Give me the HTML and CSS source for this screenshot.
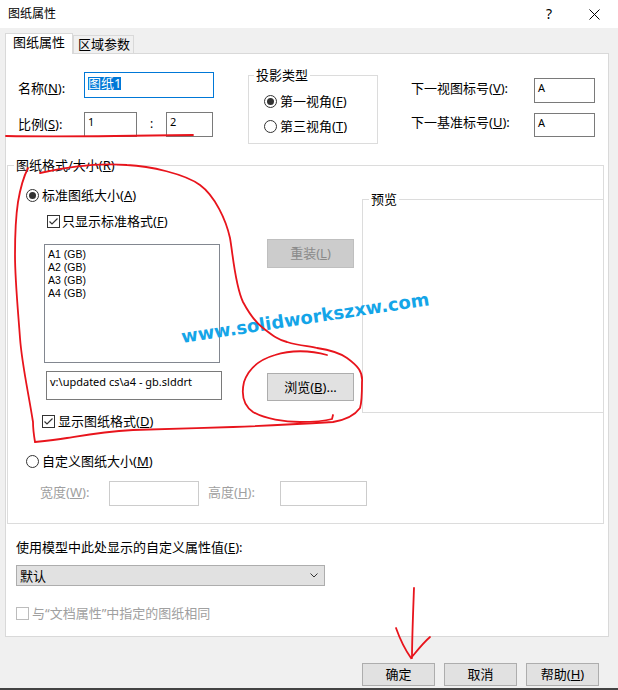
FILE: index.html
```html
<!DOCTYPE html>
<html lang="zh-CN">
<head>
<meta charset="utf-8">
<title>图纸属性</title>
<link rel="stylesheet" href="styles.css">
</head>
<body>
<div class="titlebar">
  <span class="title">图纸属性</span>
  <span class="help">?</span>
  <svg class="close" width="11" height="11" viewBox="0 0 11 11"><path d="M0.5 0.5 L10.5 10.5 M10.5 0.5 L0.5 10.5" stroke="#000" stroke-width="1" fill="none"/></svg>
</div>

<div class="tabs">
  <div class="tab active">图纸属性</div>
  <div class="tab">区域参数</div>
</div>

<div class="panel">
  <div class="top">
    <div class="basic">
      <span class="lbl lbl-name">名称(<u>N</u>):</span>
      <div class="field name-field"><span class="sel">图纸1</span></div>
      <span class="lbl lbl-scale">比例(<u>S</u>):</span>
      <div class="scale">
        <div class="field val s1">1</div>
        <span class="colon">:</span>
        <div class="field val s2">2</div>
      </div>
    </div>

    <fieldset class="group proj">
      <legend>投影类型</legend>
      <div class="opt"><span class="radio on"></span><span>第一视角(<u>F</u>)</span></div>
      <div class="opt opt2"><span class="radio"></span><span>第三视角(<u>T</u>)</span></div>
    </fieldset>

    <div class="refs">
      <span class="lbl r1">下一视图标号(<u>V</u>):</span>
      <div class="field val rin1">A</div>
      <span class="lbl r2">下一基准标号(<u>U</u>):</span>
      <div class="field val rin2">A</div>
    </div>
  </div>

  <fieldset class="group format">
    <legend>图纸格式/大小(<u>R</u>)</legend>
    <div class="row-a">
      <div class="left-col">
        <div class="opt"><span class="radio on"></span><span>标准图纸大小(<u>A</u>)</span></div>
        <div class="chk chk-std">
          <svg class="box" width="13" height="13" viewBox="0 0 13 13"><rect x="0.5" y="0.5" width="12" height="12" fill="#fff" stroke="#333"/><path d="M2.5 6.5 L5 9 L10.5 3.5" fill="none" stroke="#333" stroke-width="1.2"/></svg>
          <span>只显示标准格式(<u>F</u>)</span>
        </div>
        <div class="listbox">
          <div>A1 (GB)</div>
          <div>A2 (GB)</div>
          <div>A3 (GB)</div>
          <div>A4 (GB)</div>
        </div>
        <div class="field val path">v:\updated cs\a4 - gb.slddrt</div>
      </div>
      <div class="mid-col">
        <div class="btn disabled reload">重装(<u>L</u>)</div>
        <div class="btn browse">浏览(<u>B</u>)...</div>
      </div>
      <fieldset class="group preview">
        <legend>预览</legend>
      </fieldset>
    </div>
    <div class="chk chk-show">
      <svg class="box" width="13" height="13" viewBox="0 0 13 13"><rect x="0.5" y="0.5" width="12" height="12" fill="#fff" stroke="#333"/><path d="M2.5 6.5 L5 9 L10.5 3.5" fill="none" stroke="#333" stroke-width="1.2"/></svg>
      <span>显示图纸格式(<u>D</u>)</span>
    </div>
    <div class="opt opt-custom"><span class="radio"></span><span>自定义图纸大小(<u>M</u>)</span></div>
    <div class="size-row">
      <span class="lbl dis w-lbl">宽度(<u>W</u>):</span>
      <div class="field dis-field w-in"></div>
      <span class="lbl dis h-lbl">高度(<u>H</u>):</span>
      <div class="field dis-field h-in"></div>
    </div>
  </fieldset>

  <div class="prop-label">使用模型中此处显示的自定义属性值(<u>E</u>):</div>
  <div class="select">
    <span>默认</span>
    <svg width="8" height="5" viewBox="0 0 8 5"><path d="M0.5 0.5 L4 4 L7.5 0.5" fill="none" stroke="#333" stroke-width="1"/></svg>
  </div>
  <div class="chk same-chk">
    <svg class="box" width="13" height="13" viewBox="0 0 13 13"><rect x="0.5" y="0.5" width="12" height="12" fill="#fff" stroke="#bcbcbc"/></svg>
    <span class="dis">与“文档属性”中指定的图纸相同</span>
  </div>
</div>

<div class="buttons">
  <div class="btn dlg">确定</div>
  <div class="btn dlg">取消</div>
  <div class="btn dlg">帮助(<u>H</u>)</div>
</div>

<span class="watermark">www.solidworkszxw.com</span>

<svg class="annot" width="618" height="690" viewBox="0 0 618 690">
  <g fill="none" stroke="#e8141c" stroke-width="1.8" stroke-linecap="round">
    <path d="M6 136 C 60 137, 130 136, 193 135"/>
    <path d="M40 173 C 70 166, 100 163, 127 165 C 150 166, 185 174, 200 185 C 215 196, 226 220, 230 238 C 233 255, 235 285, 243 302 C 250 315, 255 322, 263 328 C 272 335, 278 340, 287 342 C 300 346, 310 346, 317 348 C 330 350, 340 353, 347 358 C 358 366, 363 372, 362 382 C 362 395, 362 402, 360 408 C 355 415, 345 420, 333 422 C 300 424, 260 426, 233 427 C 200 428, 160 429, 133 430 C 100 432, 80 436, 67 438 C 55 440, 45 441, 35 442 C 34 436, 33 430, 33 422 C 28 390, 22 365, 20 338 C 18 310, 15 280, 15 255 C 15 235, 16 215, 18 202 C 20 190, 23 178, 28 168"/>
    <path d="M327 355 C 310 350, 290 350, 275 355 C 258 360, 248 370, 244 382 C 241 395, 243 405, 253 412 C 265 419, 285 422, 300 422 C 315 422, 325 421, 332 419 L 333 415"/>
    <path d="M414 588 C 413 615, 412 640, 412 658 M396 628 C 401 642, 406 651, 411 658 C 416 652, 423 643, 430 637"/>
  </g>
</svg>
</body>
</html>
```

FILE: styles.css
```css
* { box-sizing: border-box; }
html, body { margin: 0; padding: 0; }
body {
  width: 618px;
  height: 690px;
  overflow: hidden;
  position: relative;
  background: #f0f0f0;
  border-bottom: 2px solid #444;
  font-family: "Noto Sans", "Noto Sans CJK SC", sans-serif;
  font-size: 13px;
  line-height: 16px;
  color: #000;
}
u { text-decoration: underline; text-underline-offset: 1px; text-decoration-thickness: 1px; }

/* title bar */
.titlebar {
  height: 28px;
  background: #fff;
  display: flex;
  align-items: center;
  padding: 0 18px 0 8px;
}
.title { flex: 1; font-size: 12px; }
.help { width: 12px; text-align: center; font-size: 14px; margin-right: 34px; }
.close { display: block; }

/* tabs */
.tabs {
  height: 25px;
  display: flex;
  align-items: flex-end;
  padding-left: 5px;
}
.tab {
  height: 18px;
  border: 1px solid #d9d9d9;
  border-bottom: none;
  background: #f0f0f0;
  padding: 0 3px 0 4px;
  line-height: 16px;
}
.tab.active {
  height: 21px;
  background: #fff;
  padding: 0 7px;
  margin-bottom: -1px;
  position: relative;
  z-index: 1;
}

/* panel */
.panel {
  margin-left: 5px;
  width: 604px;
  height: 584px;
  background: #fff;
  border: 1px solid #d9d9d9;
}
.top { display: flex; align-items: flex-start; }

.field { border: 1px solid #7a7a7a; background: #fff; }
.val { font-size: 11px; padding: 1px 3px; line-height: 16px; }

.basic {
  margin: 18px 0 0 12px;
  display: grid;
  grid-template-columns: 66px auto;
  row-gap: 14px;
}
.lbl-name { margin-top: 8px; }
.lbl-scale { margin-top: 4px; }
.name-field {
  width: 130px;
  height: 26px;
  border-color: #0078d7;
  padding: 2px 3px;
}
.sel {
  display: inline-block;
  background: #0078d7;
  color: #fff;
  line-height: 13px;
}
.scale { display: flex; align-items: flex-start; }
.s1 { width: 53px; height: 25px; }
.colon { width: 29px; text-align: center; line-height: 16px; margin-top: 4px; font-size: 12px; }
.s2 { width: 47px; height: 25px; }

/* group boxes */
fieldset.group {
  border: 1px solid #dcdcdc;
  margin: 0;
  min-width: 0;
}
fieldset.group legend {
  padding: 0 2px;
  line-height: 16px;
}
.proj {
  margin: 13px 0 0 34px !important;
  width: 130px;
  padding: 8px 0 7px 0;
}
.proj legend { margin-left: 5px; }

.opt {
  display: flex;
  align-items: center;
  gap: 3px;
  height: 20px;
}
.proj .opt { margin-left: 15px; }
.proj .opt2 { margin-top: 5px; }
.radio {
  width: 13px;
  height: 13px;
  border: 1px solid #333;
  border-radius: 50%;
  background: #fff;
  display: inline-flex;
  align-items: center;
  justify-content: center;
  flex-shrink: 0;
}
.radio.on::after {
  content: "";
  width: 7px;
  height: 7px;
  border-radius: 50%;
  background: #333;
}

.refs {
  margin: 24px 0 0 33px;
  display: grid;
  grid-template-columns: 123px 61px;
  row-gap: 10px;
}
.r1 { margin-top: 2px; }
.r2 { margin-top: 1px; }
.rin1 { height: 25px; }
.rin2 { height: 24px; }

/* paper format group */
.format {
  margin: 13px 0 0 1px !important;
  width: 597px;
  padding: 12px 0 17px 0;
}
.format > legend { margin-left: 6px; }
.row-a { display: flex; align-items: flex-start; }
.left-col { margin-left: 18px; width: 196px; flex-shrink: 0; }
.chk { display: flex; align-items: center; gap: 3px; height: 20px; }
.box { display: block; flex-shrink: 0; }
.chk-std { margin: 6px 0 0 21px; gap: 2px; }
.listbox {
  margin: 13px 0 0 18px;
  width: 176px;
  height: 119px;
  border: 1px solid #828790;
  padding: 3px 3px;
  font-family: "Liberation Sans", sans-serif;
  font-size: 10.5px;
  line-height: 13px;
}
.path {
  margin: 8px 0 0 20px;
  width: 176px;
  height: 29px;
  padding: 2px 3px;
}
.mid-col { margin-left: 45px; width: 87px; flex-shrink: 0; }
.btn {
  background: #e1e1e1;
  border: 1px solid #adadad;
  text-align: center;
}
.reload {
  margin-top: 54px;
  height: 29px;
  line-height: 27px;
  background: #cccccc;
  border-color: #bfbfbf;
  color: #8a8a8a;
}
.browse {
  margin-top: 105px;
  height: 28px;
  line-height: 26px;
}
.preview {
  margin: 6px -1px 0 8px !important;
  width: 242px;
  height: 222px;
  flex-shrink: 0;
  padding: 0;
}
.preview legend { margin-left: 6px; }
.chk-show { margin: -2px 0 0 34px; }
.opt-custom { margin: 20px 0 0 18px; }
.size-row {
  margin: 10px 0 0 32px;
  display: flex;
  align-items: flex-start;
}
.dis { color: #a0a0a0; }
.w-lbl { width: 69px; margin-top: 3px; }
.h-lbl { width: 72px; margin: 3px 0 0 9px; }
.dis-field { border-color: #cccccc; height: 25px; }
.w-in { width: 90px; }
.h-in { width: 87px; }

.prop-label { margin: 15px 0 0 10px; }
.select {
  margin: 10px 0 0 10px;
  width: 309px;
  height: 21px;
  background: #e1e1e1;
  border: 1px solid #adadad;
  padding: 0 6px 0 3px;
  display: flex;
  align-items: center;
  justify-content: space-between;
}
.select svg { display: block; }
.same-chk { margin: 17px 0 0 10px; }

/* dialog buttons */
.buttons {
  margin-top: 26px;
  display: flex;
  justify-content: flex-end;
  gap: 9px;
  padding-right: 19px;
}
.dlg { width: 73px; height: 23px; line-height: 21px; }

/* overlays */
.watermark {
  position: absolute;
  left: 183px;
  top: 326px;
  font-family: "DejaVu Sans", sans-serif;
  font-weight: bold;
  font-size: 18px;
  line-height: 22px;
  letter-spacing: 0;
  color: #14a5e8;
  white-space: nowrap;
  transform: rotate(-8.7deg);
  transform-origin: 0 100%;
  pointer-events: none;
}
.annot {
  position: absolute;
  left: 0;
  top: 0;
  pointer-events: none;
}
```
